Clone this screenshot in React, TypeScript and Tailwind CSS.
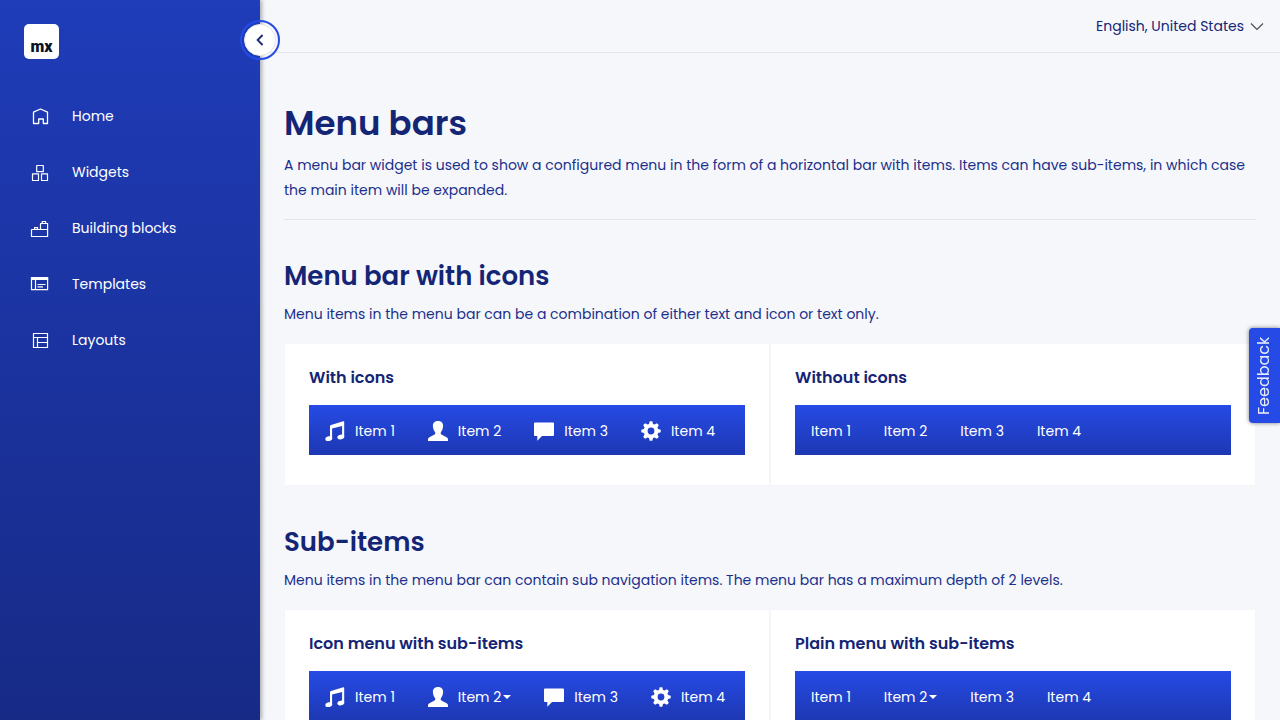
import type { ReactNode } from "react";

type IconName = "music" | "user" | "comment" | "cog";

function HomeIcon() {
  return (
    <svg className="h-5 w-5" viewBox="0 0 20 20" fill="none" stroke="currentColor" strokeWidth="1.3" strokeLinejoin="round">
      <path d="M3.5 17.5V6.2L10.5 3L17.5 6.2V17.5H13.3V13H8.7V17.5Z" />
    </svg>
  );
}

function WidgetsIcon() {
  return (
    <svg className="h-5 w-5" viewBox="0 0 20 20" fill="none" stroke="currentColor" strokeWidth="1.2" strokeLinejoin="round">
      <path d="M6.7 3.5H13.3V9.7H6.7ZM2.5 11.8H8.5V18.5H2.5ZM11.5 11.8H17.5V18.5H11.5Z" />
    </svg>
  );
}

function BlocksIcon() {
  return (
    <svg className="h-5 w-5" viewBox="0 0 20 20" fill="none" stroke="currentColor" strokeWidth="1.2" strokeLinejoin="round">
      <path d="M1.5 11.5H17.6V18.5H1.5ZM4.6 11.5V9.6H7.6V11.5M10.5 11.5V5.5H17.6V11.5M12.2 5.5V3.5H15.6V5.5" />
    </svg>
  );
}

function TemplatesIcon() {
  return (
    <svg className="h-5 w-5" viewBox="0 0 20 20" fill="none" stroke="currentColor" strokeWidth="1.2" strokeLinejoin="round">
      <path d="M1.5 3.5H17.6V15.7H1.5ZM5.5 6V15.7M7.5 10.5H15.5M7.5 12.8H13" />
      <path d="M1.5 3.5H17.6V5.5H1.5Z" fill="currentColor" />
    </svg>
  );
}

function LayoutsIcon() {
  return (
    <svg className="h-5 w-5" viewBox="0 0 20 20" fill="none" stroke="currentColor" strokeWidth="1.2" strokeLinejoin="round">
      <path d="M3.5 3.5H17.5V17.5H3.5ZM3.5 7.5H17.5M7.5 7.5V17.5M7.5 12.5H17.5" />
    </svg>
  );
}

const glyphs: Record<IconName, ReactNode> = {
  music: (
    <>
      <path d="M5 5.2Q5 4.2 6 3.9L18.2.2Q19.2 0 19.2.9V15.8H17.1V4.9L7.1 7.6V17.6H5Z" />
      <ellipse cx="3.8" cy="17.7" rx="3.5" ry="2.4" transform="rotate(-12 3.8 17.7)" />
      <ellipse cx="15.8" cy="16" rx="3.5" ry="2.4" transform="rotate(-12 15.8 16)" />
    </>
  ),
  user: (
    <path d="M10 0C13.6 0 15.2 2.2 15.1 5.1C15 8.2 13.9 9.9 13 11.1C12.5 11.9 12.6 13.1 13.4 13.6L18.6 16.2C19.5 16.7 20 17.4 20 18.2V20H0V18.2C0 17.4.5 16.7 1.4 16.2L6.6 13.6C7.4 13.1 7.5 11.9 7 11.1C6.1 9.9 5 8.2 4.9 5.1C4.8 2.2 6.4 0 10 0Z" />
  ),
  comment: <path d="M1 1.4H19Q20 1.4 20 2.4V14Q20 15 19 15H8L3.3 19.7V15H1Q0 15 0 14V2.4Q0 1.4 1 1.4Z" />,
  cog: (
    <path
      fillRule="evenodd"
      d="M8.7.3H11.3L12 2.9L13.5 3.5L15.9 2.2L17.8 4.1L16.5 6.5L17.1 8L19.7 8.7V11.3L17.1 12L16.5 13.5L17.8 15.9L15.9 17.8L13.5 16.5L12 17.1L11.3 19.7H8.7L8 17.1L6.5 16.5L4.1 17.8L2.2 15.9L3.5 13.5L2.9 12L.3 11.3V8.7L2.9 8L3.5 6.5L2.2 4.1L4.1 2.2L6.5 3.5L8 2.9ZM10 6.6A3.4 3.4 0 1 0 10 13.4A3.4 3.4 0 1 0 10 6.6Z"
    />
  ),
};

const navigation = [
  { label: "Home", icon: <HomeIcon /> },
  { label: "Widgets", icon: <WidgetsIcon /> },
  { label: "Building blocks", icon: <BlocksIcon /> },
  { label: "Templates", icon: <TemplatesIcon /> },
  { label: "Layouts", icon: <LayoutsIcon /> },
];

const items: { label: string; icon: IconName }[] = [
  { label: "Item 1", icon: "music" },
  { label: "Item 2", icon: "user" },
  { label: "Item 3", icon: "comment" },
  { label: "Item 4", icon: "cog" },
];

function MenuBar({ icons = false, subItems = false }: { icons?: boolean; subItems?: boolean }) {
  return (
    <ul className="flex h-[50px] gap-px bg-linear-to-b from-[#264ae5] to-[#1d38b3] text-white">
      {items.map((item) => (
        <li key={item.label} className="flex">
          <a href="#" className="flex items-center px-4 pt-0.5 whitespace-nowrap">
            {icons && (
              <svg className="mr-[10px] h-5 w-5" viewBox="0 0 20 20" fill="currentColor">
                {glyphs[item.icon]}
              </svg>
            )}
            {item.label}
            {subItems && item.label === "Item 2" && (
              <svg className="ml-0.5 h-1 w-2" viewBox="0 0 8 4" fill="currentColor">
                <path d="M0 0H8L4 4Z" />
              </svg>
            )}
          </a>
        </li>
      ))}
    </ul>
  );
}

function Card({ title, children }: { title: string; children: ReactNode }) {
  return (
    <div className="min-w-0 flex-1 border border-[#f5f6fa] bg-white px-6 pt-5 pb-[30px]">
      <h3 className="mb-[13px] text-base leading-7 font-semibold text-[#152576]">{title}</h3>
      {children}
    </div>
  );
}

function Section({ title, text, children }: { title: string; text: string; children: ReactNode }) {
  return (
    <section className="mt-9">
      <h2 className="text-[26px] leading-10 font-semibold text-[#152576]">{title}</h2>
      <p className="mt-1.5 leading-[25px]">{text}</p>
      <div className="mt-4 flex">{children}</div>
    </section>
  );
}

export default function App() {
  return (
    <div className="flex h-screen bg-[#f5f7fb] font-[Poppins,Inter,sans-serif] text-sm text-[#1c2f8c]">
      <aside className="relative z-10 w-[260px] shrink-0 bg-linear-to-b from-[#1f3cb9] to-[#172a86] text-white shadow-[2px_0_4px_rgba(0,0,0,0.3)]">
        <div className="px-6 pt-6">
          <a href="#" className="flex h-[35px] w-[35px] items-end justify-center rounded-[5px] bg-white pb-0.5 font-[Roboto,sans-serif] text-base leading-5 font-black text-[#0a1325]">
            mx
          </a>
        </div>
        <nav className="mt-[29px]">
          {navigation.map((entry) => (
            <a key={entry.label} href="#" className="flex h-14 items-center gap-[22px] pl-[30px]">
              {entry.icon}
              {entry.label}
            </a>
          ))}
        </nav>
        <button
          type="button"
          aria-label="Collapse navigation"
          className="absolute top-6 -right-4 flex h-8 w-8 items-center justify-center rounded-full border border-[#e7e7e9] bg-white text-[#152576] outline-2 outline-offset-2 outline-[#264ae5]"
        >
          <svg className="h-3 w-3" viewBox="0 0 12 12" fill="none" stroke="currentColor" strokeWidth="1.8">
            <path d="M8.6 1L3.6 6L8.6 11" />
          </svg>
        </button>
      </aside>

      <main className="min-w-0 flex-1 overflow-y-auto [scrollbar-width:none]">
        <header className="flex h-[53px] items-center justify-end border-b border-[#e4e6f0] px-4">
          <button type="button" className="flex items-center gap-1.5 text-[#152576]">
            English, United States
            <svg className="h-3.5 w-3.5" viewBox="0 0 14 14" fill="none" stroke="#4b4b4b" strokeWidth="1.1">
              <path d="M1 4.5L7 10.5L13 4.5" />
            </svg>
          </button>
        </header>
        <div className="px-6 pt-[46px] pb-10">
          <h1 className="text-[34px] leading-[48px] font-semibold text-[#152576]">Menu bars</h1>
          <p className="mt-1.5 border-b border-[#e4e6ec] pb-4 leading-[25px]">
            A menu bar widget is used to show a configured menu in the form of a horizontal bar with items. Items can
            have sub-items, in which case the main item will be expanded.
          </p>
          <Section
            title="Menu bar with icons"
            text="Menu items in the menu bar can be a combination of either text and icon or text only."
          >
            <Card title="With icons">
              <MenuBar icons />
            </Card>
            <Card title="Without icons">
              <MenuBar />
            </Card>
          </Section>
          <Section
            title="Sub-items"
            text="Menu items in the menu bar can contain sub navigation items. The menu bar has a maximum depth of 2 levels."
          >
            <Card title="Icon menu with sub-items">
              <MenuBar icons subItems />
            </Card>
            <Card title="Plain menu with sub-items">
              <MenuBar subItems />
            </Card>
          </Section>
        </div>
      </main>

      <button
        type="button"
        className="fixed top-[328px] right-0 z-20 flex h-[95px] w-[31px] rotate-180 items-center justify-center rounded-r bg-[#264ae5] text-base text-white/90 shadow-[0_0_4px_rgba(0,0,0,0.5)] [writing-mode:vertical-rl]"
      >
        Feedback
      </button>
    </div>
  );
}
